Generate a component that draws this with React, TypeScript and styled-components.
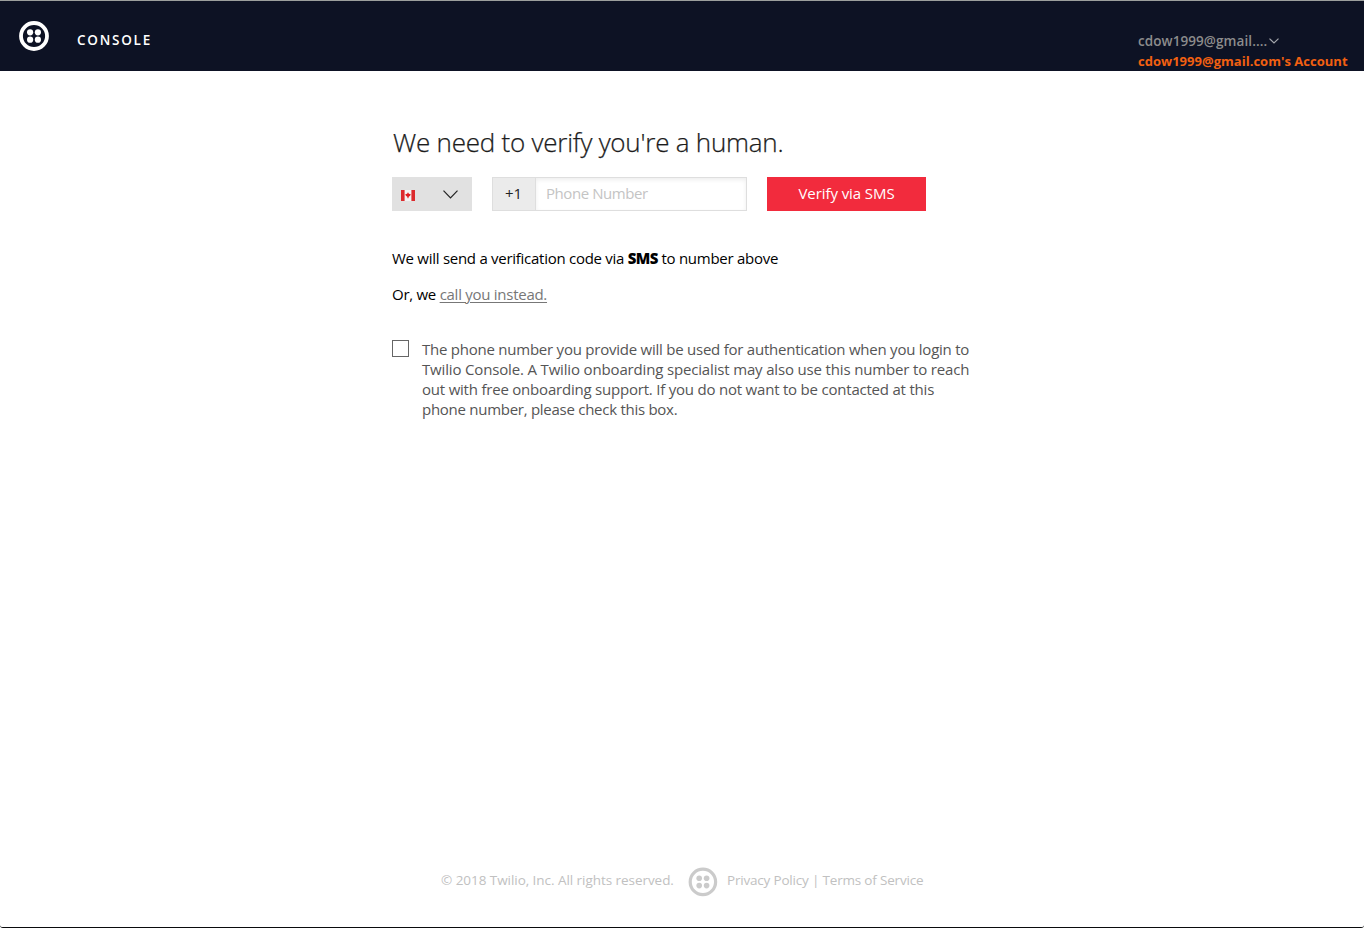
import React from "react";
import styled, { createGlobalStyle } from "styled-components";

const GlobalStyle = createGlobalStyle`
  * { box-sizing: border-box; }
  body { margin: 0; background: #fff; font-family: "Open Sans", "Noto Sans", sans-serif; }
  p, h1 { margin: 0; }
`;

const Page = styled.div`
  display: flex;
  flex-direction: column;
  height: 928px;
  overflow: hidden;
  border-bottom: 1px solid #0a0b0d;
  border-radius: 0 0 3px 3px;
  background: #fff;
`;

const Header = styled.header`
  display: flex;
  flex: none;
  height: 71px;
  padding: 0 16px 0 19px;
  border-top: 1px solid #9c9f9d;
  background: #0d1224;
`;

const HomeLink = styled.div`
  margin-top: 20px;
  height: 30px;
`;

const Brand = styled.div`
  margin: 30px auto 0 28px;
  color: #fff;
  font-size: 13.5px;
  font-weight: 600;
  line-height: 19px;
  letter-spacing: 1.75px;
`;

const Account = styled.div`
  width: 210px;
  margin-top: 30px;
  font-size: 13px;
  font-weight: 600;
  line-height: 20px;
  white-space: nowrap;
`;

const UserMenu = styled.div`
  display: flex;
  align-items: center;
  gap: 2px;
  color: #8c8c8c;
  font-size: 13.5px;
  letter-spacing: 0.08px;
`;

const AccountName = styled.div`
  color: #f26011;
  font-weight: 700;
  letter-spacing: 0.02px;
`;

const Main = styled.main`
  flex: 1;
  width: 580px;
  margin: 0 auto;
  padding-top: 53px;
`;

const Title = styled.h1`
  padding-left: 1px;
  color: #1c1c1c;
  font-size: 26px;
  font-weight: 300;
  -webkit-text-stroke: 0.25px #1c1c1c;
  line-height: 36px;
  letter-spacing: -0.23px;
  white-space: nowrap;
`;

const FormRow = styled.div`
  display: flex;
  gap: 20px;
  height: 34px;
  margin-top: 17px;
`;

const CountrySelect = styled.div`
  display: flex;
  align-items: center;
  justify-content: space-between;
  width: 80px;
  padding: 0 14px 0 9px;
  background: #e1e1e1;
`;

const PhoneField = styled.div`
  display: flex;
  width: 255px;
  border: 1px solid #dedede;
`;

const Prefix = styled.span`
  width: 43px;
  padding-right: 1px;
  border-right: 1px solid #dedede;
  background: #ebebeb;
  color: #222;
  font-size: 15px;
  line-height: 30px;
  text-align: center;
`;

const PhoneInput = styled.input`
  flex: 1;
  min-width: 0;
  padding: 0 10px 2px;
  border: 0;
  outline: 0;
  box-shadow: inset 0 2px 4px rgba(0, 0, 0, 0.07);
  background: #fff;
  color: #222;
  font: 15px "Open Sans", sans-serif;
  letter-spacing: -0.43px;
  &::placeholder { color: #c4c4c4; opacity: 1; }
`;

const VerifyButton = styled.button`
  width: 159px;
  padding: 0 0 2px;
  border: 0;
  background: #f22b3d;
  color: #fff;
  font: 15px/32px "Open Sans", sans-serif;
  letter-spacing: -0.08px;
`;

const Note = styled.p<{ $top: number }>`
  margin-top: ${(p) => p.$top}px;
  color: #000;
  font-size: 15px;
  line-height: 20px;
  letter-spacing: -0.27px;
  white-space: nowrap;
`;

const Strong = styled.b`
  font-weight: 800;
  letter-spacing: -0.6px;
`;

const CallLink = styled.a`
  color: #777;
  text-decoration: underline;
  text-decoration-thickness: 1px;
  text-underline-offset: 2px;
`;

const Consent = styled.label`
  display: flex;
  gap: 13px;
  margin-top: 35px;
  color: #555;
  font-size: 15px;
  line-height: 20px;
  white-space: nowrap;
`;

const ConsentLine = styled.span<{ $tracking: number }>`
  display: block;
  letter-spacing: ${(p) => p.$tracking}px;
`;

const Checkbox = styled.span`
  flex: none;
  width: 17px;
  height: 17px;
  margin-top: 1px;
  border: 1px solid #666;
  background: #fff;
`;

const Footer = styled.footer`
  display: flex;
  flex: none;
  align-items: flex-start;
  width: 484px;
  height: 61px;
  margin: 0 auto;
  padding-left: 1px;
  color: #c1c1c1;
  font-size: 13.5px;
  line-height: 28px;
  white-space: nowrap;
`;

const Copyright = styled.span`
  width: 247px;
  letter-spacing: -0.05px;
`;

const Legal = styled.span`
  margin-left: 9px;
  letter-spacing: -0.19px;
`;

const Mark = styled.svg<{ $top?: number }>`
  display: block;
  flex: none;
  margin-top: ${(p) => p.$top ?? 0}px;
`;

const Logo = () => (
  <Mark width="30" height="30" viewBox="0 0 30 30" fill="#fff">
    <circle cx="15" cy="15" r="13" fill="none" stroke="#fff" strokeWidth="3.8" />
    <circle cx="11.1" cy="11.3" r="3.1" />
    <circle cx="18.9" cy="11.3" r="3.1" />
    <circle cx="11.1" cy="18.7" r="3.1" />
    <circle cx="18.9" cy="18.7" r="3.1" />
  </Mark>
);

const FooterLogo = () => (
  <Mark $top={1} width="30" height="30" viewBox="0 0 30 30" fill="#cbcbcb">
    <circle cx="14.9" cy="14.9" r="12.7" fill="none" stroke="#cbcbcb" strokeWidth="3.2" />
    <circle cx="11.2" cy="11.3" r="2.8" />
    <circle cx="18.6" cy="11.3" r="2.8" />
    <circle cx="11.2" cy="18.6" r="2.8" />
    <circle cx="18.6" cy="18.6" r="2.8" />
  </Mark>
);

const Flag = () => (
  <Mark $top={3} width="14" height="11" viewBox="0 0 14 11">
    <rect width="14" height="11" fill="#f3f3f3" />
    <rect width="3.6" height="11" fill="#dc2a2d" />
    <rect x="10.4" width="3.6" height="11" fill="#dc2a2d" />
    <path d="M7 2.2l.9 1.5 1.9.5-.7 1.6-1.4 1-.3 1.4h-.8l-.3-1.4-1.4-1-.7-1.6 1.9-.5z" fill="#e01c20" />
  </Mark>
);

const Chevron = ({ width, height, color }: { width: number; height: number; color: string }) => (
  <svg width={width} height={height} viewBox={`0 0 ${width} ${height}`} fill="none" stroke={color} strokeWidth="1.2">
    <path d={`M.5 .6L${width / 2} ${height - 1}L${width - 0.5} .6`} />
  </svg>
);

const consentLines = [
  { text: "The phone number you provide will be used for authentication when you login to", tracking: -0.235 },
  { text: "Twilio Console. A Twilio onboarding specialist may also use this number to reach", tracking: -0.16 },
  { text: "out with free onboarding support. If you do not want to be contacted at this", tracking: -0.21 },
  { text: "phone number, please check this box.", tracking: -0.27 },
];

export default function App() {
  return (
    <>
      <GlobalStyle />
      <Page>
        <Header>
          <HomeLink><Logo /></HomeLink>
          <Brand>CONSOLE</Brand>
          <Account>
            <UserMenu>cdow1999@gmail.... <Chevron width={10} height={6} color="#a5a7ad" /></UserMenu>
            <AccountName>cdow1999@gmail.com's Account</AccountName>
          </Account>
        </Header>
        <Main>
          <Title>We need to verify you're a human.</Title>
          <FormRow>
            <CountrySelect>
              <Flag />
              <Chevron width={15} height={9} color="#222" />
            </CountrySelect>
            <PhoneField>
              <Prefix>+1</Prefix>
              <PhoneInput placeholder="Phone Number" />
            </PhoneField>
            <VerifyButton>Verify via SMS</VerifyButton>
          </FormRow>
          <Note $top={37}>We will send a verification code via <Strong>SMS</Strong> to number above</Note>
          <Note $top={16}>Or, we <CallLink>call you instead.</CallLink></Note>
          <Consent>
            <Checkbox />
            <span>
              {consentLines.map((line) => (
                <ConsentLine key={line.text} $tracking={line.tracking}>{line.text}</ConsentLine>
              ))}
            </span>
          </Consent>
        </Main>
        <Footer>
          <Copyright>© 2018 Twilio, Inc. All rights reserved.</Copyright>
          <FooterLogo />
          <Legal>Privacy Policy | Terms of Service</Legal>
        </Footer>
      </Page>
    </>
  );
}
